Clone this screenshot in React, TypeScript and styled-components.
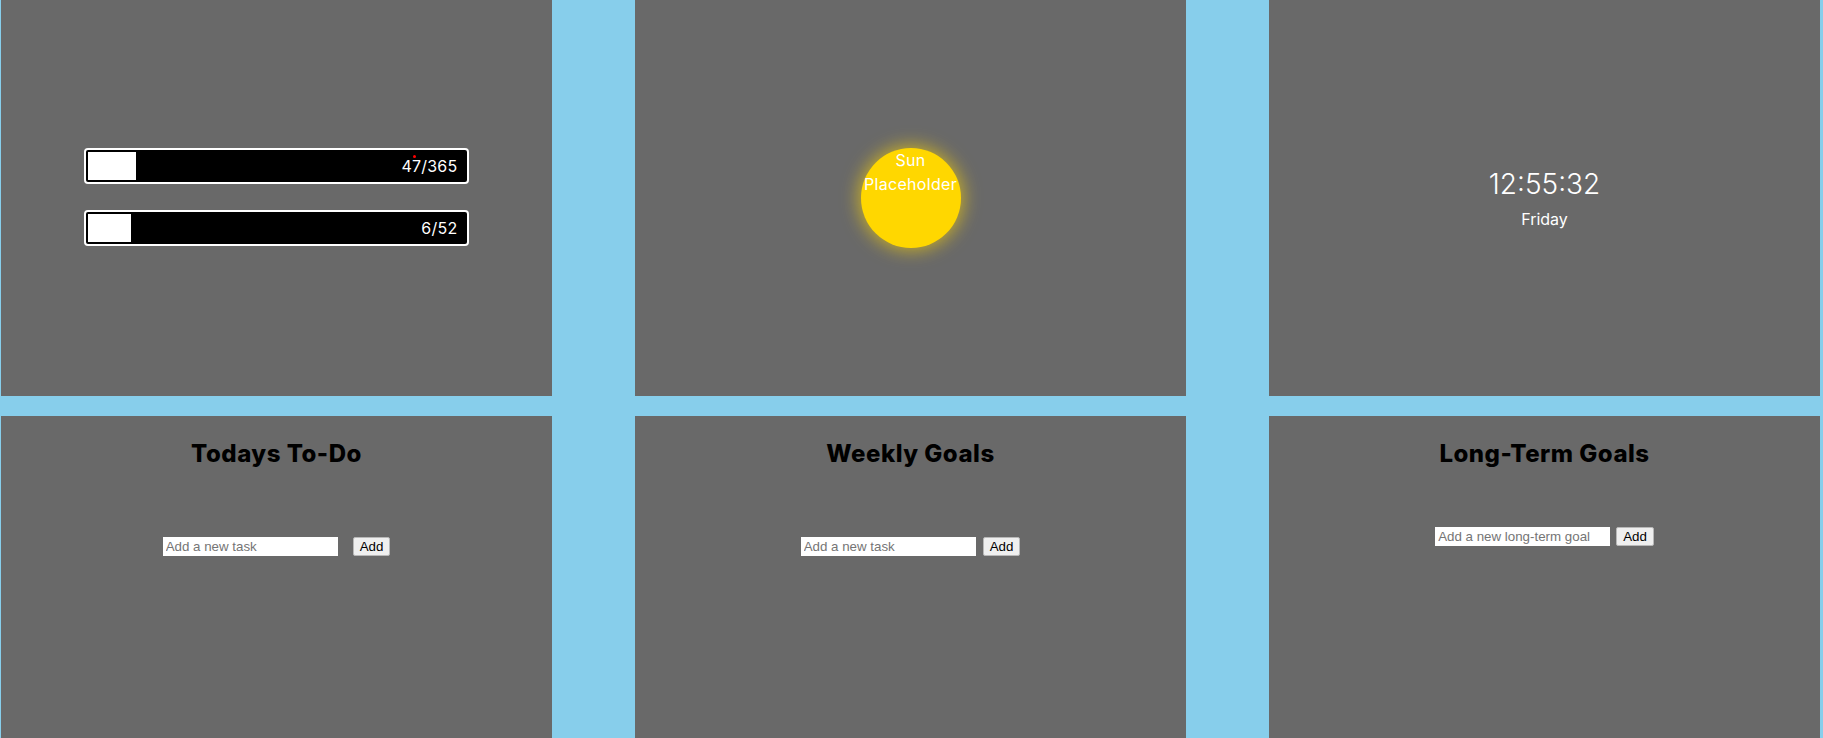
import React from "react";
import styled, { createGlobalStyle } from "styled-components";

const GlobalStyle = createGlobalStyle`
  html, body {
    margin: 0;
    padding: 0;
    background: #87ceeb;
  }
  body {
    font-family: Inter, "Noto Sans", sans-serif;
  }
  * {
    box-sizing: border-box;
  }
`;

const Grid = styled.main`
  display: grid;
  grid-template-columns: repeat(3, 551px);
  grid-auto-rows: 396px;
  column-gap: 83px;
  row-gap: 20px;
  padding: 0 3px 0 1px;
`;

const Panel = styled.section<{ $center?: boolean }>`
  background: #696969;
  display: flex;
  flex-direction: column;
  align-items: center;
  justify-content: ${(p) => (p.$center ? "center" : "flex-start")};
  overflow: hidden;
`;

/* progress bars */
const BarStack = styled.div`
  width: 70%;
  display: flex;
  flex-direction: column;
  gap: 26px;
  margin-bottom: 3px;
`;

const Bar = styled.div`
  position: relative;
  height: 36px;
  padding: 2px;
  border: 2px solid #fff;
  border-radius: 4px;
  background: #000;
  display: flex;
  align-items: center;
`;

const Fill = styled.div`
  height: 100%;
  background: #fff;
`;

const BarLabel = styled.span`
  margin-left: auto;
  padding-right: 8px;
  color: #fff;
  font-size: 16px;
  line-height: 24px;
  letter-spacing: 0.2px;
`;

const Marker = styled.span`
  position: absolute;
  left: 327px;
  top: 5px;
  width: 3px;
  height: 3px;
  border-radius: 50%;
  background: #ff0000;
`;

/* sun */
const Sun = styled.div`
  width: 100px;
  height: 100px;
  border-radius: 50%;
  background: #ffd700;
  box-shadow: 0 0 18px 2px rgba(255, 215, 0, 0.65);
  color: #fff;
  text-align: center;
  font-size: 16px;
  line-height: 24px;
  letter-spacing: 0.3px;
`;

/* clock */
const Time = styled.div`
  color: #fff;
  font-size: 28px;
  line-height: 45px;
  font-weight: 300;
`;

const Day = styled.div`
  color: #fff;
  font-size: 16px;
  line-height: 24px;
  margin-bottom: 4px;
`;

/* lists */
const Title = styled.h2`
  margin: 20px 0 0;
  color: #000;
  font-size: 24px;
  line-height: 36px;
  font-weight: 800;
  letter-spacing: 0.5px;
`;

const TaskForm = styled.form<{ $gap: number; $top: number }>`
  display: flex;
  align-items: center;
  gap: ${(p) => p.$gap}px;
  margin-top: ${(p) => p.$top}px;
`;

const TaskInput = styled.input`
  width: 175px;
  height: 19px;
  padding: 0 3px;
  border: none;
  background: #fff;
  font-family: "Liberation Sans", Arial, sans-serif;
  font-size: 13.33px;
  color: #000;
  outline: none;
  &::placeholder {
    color: #757575;
  }
`;

const AddButton = styled.button`
  height: 19px;
  padding: 0 6px;
  border: 1px solid #b8b8b8;
  border-radius: 2px;
  background: #efefef;
  color: #000;
  font-family: "Liberation Sans", Arial, sans-serif;
  font-size: 13.33px;
  line-height: 17px;
`;

const bars = [
  { value: 47, total: 365, marker: true },
  { value: 6, total: 52, marker: false },
];

const lists = [
  { title: "Todays To-Do", placeholder: "Add a new task", gap: 15, top: 65 },
  { title: "Weekly Goals", placeholder: "Add a new task", gap: 7, top: 65 },
  { title: "Long-Term Goals", placeholder: "Add a new long-term goal", gap: 6, top: 55 },
];

export default function App() {
  return (
    <>
      <GlobalStyle />
      <Grid>
        <Panel $center>
          <BarStack>
            {bars.map((b) => (
              <Bar key={b.total}>
                <Fill style={{ width: `${(b.value / b.total) * 100}%` }} />
                <BarLabel>
                  {b.value}/{b.total}
                </BarLabel>
                {b.marker && <Marker />}
              </Bar>
            ))}
          </BarStack>
        </Panel>
        <Panel $center>
          <Sun>Sun Placeholder</Sun>
        </Panel>
        <Panel $center>
          <Time>12:55:32</Time>
          <Day>Friday</Day>
        </Panel>
        {lists.map((l) => (
          <Panel key={l.title}>
            <Title>{l.title}</Title>
            <TaskForm $gap={l.gap} $top={l.top} onSubmit={(e) => e.preventDefault()}>
              <TaskInput type="text" placeholder={l.placeholder} />
              <AddButton type="submit">Add</AddButton>
            </TaskForm>
          </Panel>
        ))}
      </Grid>
    </>
  );
}
